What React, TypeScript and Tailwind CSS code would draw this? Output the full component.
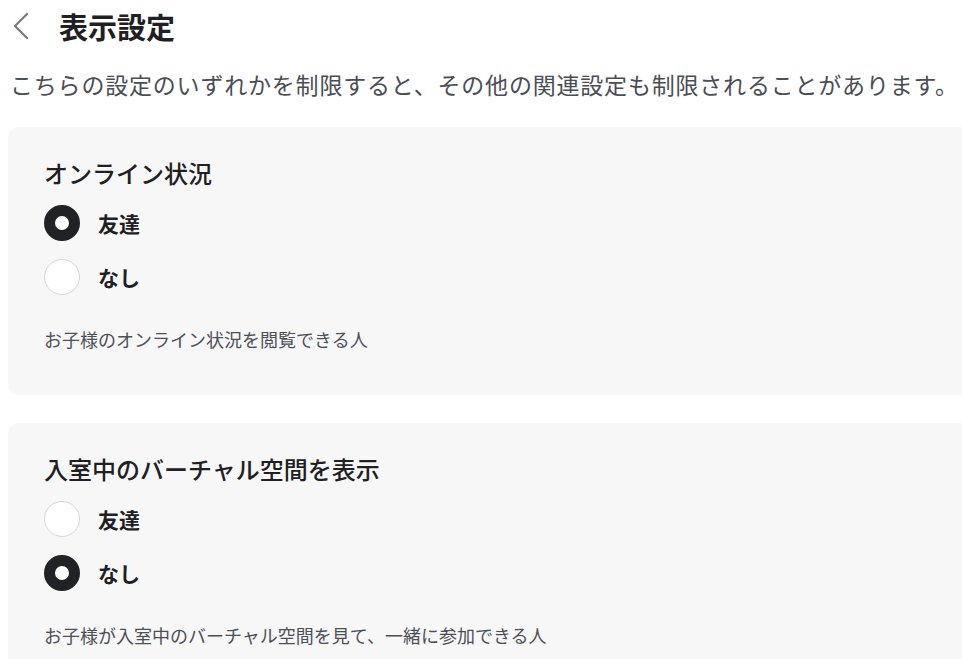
import { useState } from "react";

type Choice = "friends" | "none";

interface SettingCardProps {
  title: string;
  description: string;
  value: Choice;
  onChange: (v: Choice) => void;
}

const options: { value: Choice; label: string }[] = [
  { value: "friends", label: "友達" },
  { value: "none", label: "なし" },
];

function Radio({ checked }: { checked: boolean }) {
  return checked ? (
    <span className="block h-9 w-9 shrink-0 rounded-full border-[11px] border-[#212226] bg-white" />
  ) : (
    <span className="block h-9 w-9 shrink-0 rounded-full border border-[#d6d6dc] bg-white" />
  );
}

function SettingCard({ title, description, value, onChange }: SettingCardProps) {
  return (
    <section className="-mr-6 rounded-[10px] bg-[#f7f7f7] pb-[44px] pl-9 pt-[30px]">
      <h2 className="text-[24px] leading-[32px] font-medium text-[#1f2023]">{title}</h2>
      <div className="mt-[16px] flex flex-col gap-[18px]">
        {options.map((o) => (
          <button
            key={o.value}
            type="button"
            onClick={() => onChange(o.value)}
            className="flex items-center gap-[18px] text-left"
          >
            <Radio checked={value === o.value} />
            <span className="text-[21px] leading-[36px] font-bold text-[#1f2023]">{o.label}</span>
          </button>
        ))}
      </div>
      <p className="mt-8 text-[18px] leading-[24px] text-[#4b4f58]">{description}</p>
    </section>
  );
}

export default function App() {
  const [online, setOnline] = useState<Choice>("friends");
  const [space, setSpace] = useState<Choice>("none");

  return (
    <div
      className="h-[659px] w-[962px] overflow-hidden bg-white"
      style={{ fontFamily: '"Noto Sans CJK JP", "Noto Sans", sans-serif' }}
    >
      <header className="flex h-[52px] items-center pl-3">
        <button type="button" className="flex h-[28px] w-[18px] items-center">
          <svg width="18" height="28" viewBox="0 0 18 28" fill="none">
            <path d="M15 2 L3 14 L15 26" stroke="#7a7a7a" strokeWidth="2.2" strokeLinecap="round" strokeLinejoin="round" />
          </svg>
        </button>
        <h1 className="ml-[29px] text-[29px] leading-[40px] font-bold text-[#1f2023]">表示設定</h1>
      </header>
      <p className="pl-[10px] pt-[16px] text-[23px] leading-[32px] tracking-[0.8px] whitespace-nowrap text-[#4a4d55]">
        こちらの設定のいずれかを制限すると、その他の関連設定も制限されることがあります。
      </p>
      <div className="mt-[27px] flex flex-col gap-7 pl-2">
        <SettingCard
          title="オンライン状況"
          description="お子様のオンライン状況を閲覧できる人"
          value={online}
          onChange={setOnline}
        />
        <SettingCard
          title="入室中のバーチャル空間を表示"
          description="お子様が入室中のバーチャル空間を見て、一緒に参加できる人"
          value={space}
          onChange={setSpace}
        />
      </div>
    </div>
  );
}
